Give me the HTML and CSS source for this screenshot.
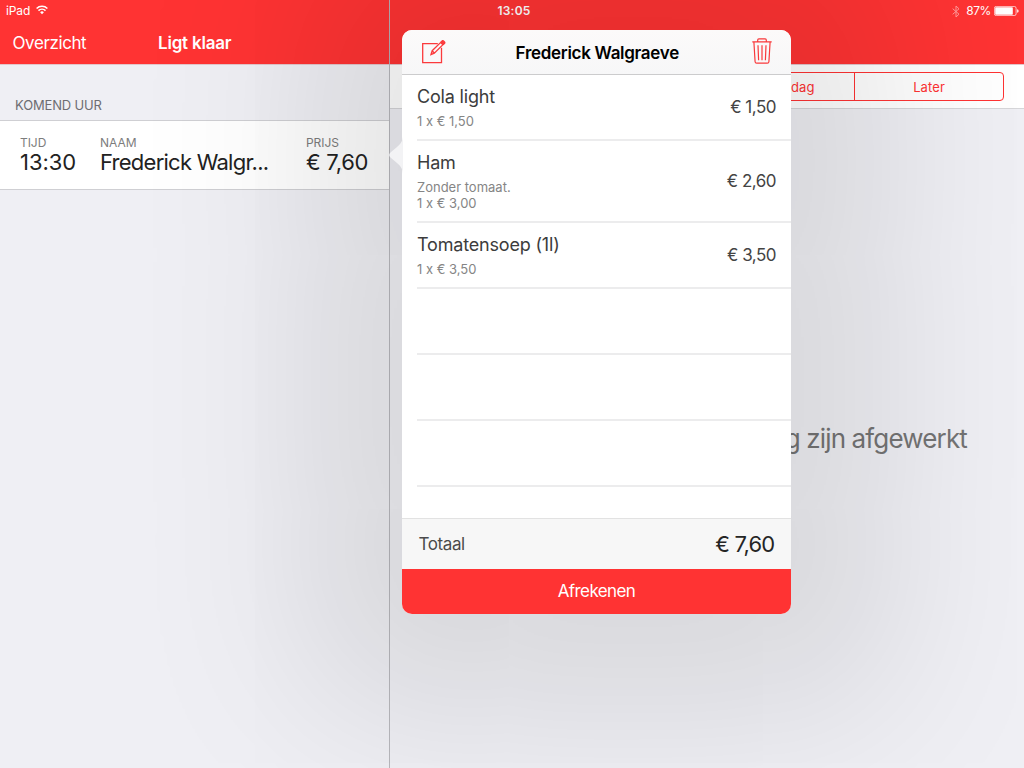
FILE: index.html
```html
<!DOCTYPE html>
<html lang="nl">
<head>
<meta charset="utf-8">
<title>Ligt klaar</title>
<link rel="stylesheet" href="styles.css">
</head>
<body>
<div class="screen">
  <header class="status">
    <div class="status-left"><span class="device">iPad</span>
      <svg class="wifi" width="12" height="10" viewBox="0 0 12 10" fill="none" stroke="#fff" stroke-width="1.5"><path d="M.6 3.500a7.700 7.700 0 0 1 10.800 0M2.500 5.600a5 5 0 0 1 7 0"/><path d="M6 9.300 4.100 7.200a2.800 2.800 0 0 1 3.800 0z" fill="#fff" stroke="none"/></svg>
    </div>
    <span class="clock">13:05</span>
    <div class="status-right">
      <svg class="bt" width="8" height="13" viewBox="0 0 8 13" fill="none" stroke="#fff" stroke-width="1"><path d="M.7 3.700 7 9.200 4 12V1l3 2.800L.7 9.300"/></svg>
      <span class="percent">87%</span>
      <svg width="25" height="10" viewBox="0 0 25 10"><rect x=".4" y=".4" width="21.700" height="9.200" rx="1.800" fill="none" stroke="#fff" stroke-width=".7"/><rect x="1.200" y="1.200" width="17.600" height="7.600" rx=".8" fill="#fff"/><path d="M23.200 3.200q1.400.3 1.400 1.800t-1.400 1.800z" fill="#fff"/></svg>
    </div>
  </header>
  <main class="split">
    <section class="master">
      <nav class="navbar"><a class="back">Overzicht</a><h1 class="nav-title">Ligt klaar</h1></nav>
      <h2 class="section-title">KOMEND UUR</h2>
      <div class="order">
        <div class="field time"><span class="label">TIJD</span><span class="value">13:30</span></div>
        <div class="field name"><span class="label">NAAM</span><span class="value">Frederick Walgr...</span></div>
        <div class="field price"><span class="label">PRIJS</span><span class="value">€ 7,60</span></div>
      </div>
    </section>
    <section class="detail">
      <div class="navbar"></div>
      <div class="toolbar"><div class="segments"><span class="segment day">dag</span><span class="segment later">Later</span></div></div>
      <p class="empty">g zijn afgewerkt</p>
    </section>
  </main>
  <div class="divider"></div>
  <aside class="popover">
    <svg class="arrow" width="14" height="38" viewBox="0 0 14 38"><path d="M14 0C13.500 6 11 8.500 8 11L1.500 16.500Q-1 19 1.500 21.500L8 27C11 29.500 13.500 32 14 38z" fill="#f3f3f5"/></svg>
    <header class="pop-head">
      <svg class="compose" width="24" height="24" viewBox="0 0 24 24" fill="none" stroke="#fb3a3c" stroke-width="1.300"><path d="M15.800 3.600H.7V22.700H19.500V7.800"/><path d="m9 14.500 1.200-3.800L20.300.9q.6-.5 1.200 0l1 1q.5.6 0 1.200L12.300 13.100zM18.700 2.500l2.200 2.200M10.200 10.800l2 2.200"/><path d="m19.300 2 1.100-1 2.200 2-1.100 1.200z" fill="#fb3a3c"/></svg>
      <h2 class="pop-title">Frederick Walgraeve</h2>
      <svg class="trash" width="20" height="26" viewBox="0 0 20 26" fill="none" stroke="#f9393b" stroke-width="1.200"><path d="M.3 3.900H19.700M5.700 3.700V2Q5.700.8 6.900.8h6.200q1.200 0 1.200 1.200v1.700M1.900 4 3.100 23.700Q3.200 25.200 4.700 25.200H15.300Q16.800 25.200 16.900 23.700L18.100 4M6 7.200l.6 15M10 7.200v15M14 7.200l-.6 15"/></svg>
    </header>
    <ul class="lines">
      <li class="line"><div><p class="item">Cola light</p><p class="note">1 x € 1,50</p></div><span class="amount">€ 1,50</span></li>
      <li class="line tall"><div><p class="item">Ham</p><p class="note">Zonder tomaat.<br>1 x € 3,00</p></div><span class="amount">€ 2,60</span></li>
      <li class="line"><div><p class="item">Tomatensoep (1l)</p><p class="note">1 x € 3,50</p></div><span class="amount">€ 3,50</span></li>
      <li class="line"></li><li class="line"></li><li class="line"></li>
    </ul>
    <div class="total"><span class="total-label">Totaal</span><span class="total-value">€ 7,60</span></div>
    <button class="pay">Afrekenen</button>
  </aside>
</div>
</body>
</html>
```

FILE: styles.css
```css
* { box-sizing: border-box; margin: 0; padding: 0; }
body { font-family: Inter, "Liberation Sans", sans-serif; background: #efeff4; }
.screen { position: relative; width: 1024px; height: 768px; overflow: hidden; display: flex; flex-direction: column; }
.status { height: 20px; background: #ff3333; color: #fff; display: grid; grid-template-columns: 1fr auto 1fr; align-items: center; font-size: 12px; line-height: 20px; padding: 1px 6px 0 6px; }
.status-left { display: flex; align-items: center; gap: 6px; }
.device { letter-spacing: -.1px; }
.wifi { margin-top: -2px; }
.clock { font-weight: 600; letter-spacing: .25px; padding-left: 4px; }
.status-right { display: flex; align-items: center; justify-content: flex-end; margin-right: -1px; }
.percent { letter-spacing: -.4px; margin: 0 3px 0 6px; }
.bt { opacity: .5; }
.split { flex: 1; display: flex; }
.master { width: 390px; padding-right: 1px; }
.detail { flex: 1; }
.divider { position: absolute; left: 389px; top: 0; width: 1px; height: 768px; background: rgba(180,180,185,.95); }
.navbar { height: 45px; background: #ff3333; border-bottom: 1px solid #e3c5ca; color: #fff; display: flex; align-items: center; padding: 1px 0 0 12.500px; }
.master .navbar { margin-right: -1px; }
.back { font-size: 17px; width: 145.500px; letter-spacing: -.4px; }
.nav-title { font-size: 17px; font-weight: 600; letter-spacing: -.2px; }
.section-title { height: 56px; padding: 33px 15px 0; font-size: 13px; line-height: 15px; font-weight: 400; color: #6d6d72; letter-spacing: -.15px; border-bottom: 1px solid #cfcfd3; }
.order { height: 69px; background: #fff; border-bottom: 1px solid #cfcfd3; display: flex; padding: 14px 0 0 20px; }
.field { display: flex; flex-direction: column; }
.time { width: 80px; }
.name { width: 206px; }
.label { font-size: 12px; line-height: 15px; color: #7d7d7d; letter-spacing: -.05px; }
.value { font-size: 22px; line-height: 25px; color: #222; letter-spacing: -.3px; }
.time .value { letter-spacing: -.05px; }
.name .value { letter-spacing: -.75px; }
.toolbar { height: 44px; background: #fff; border-bottom: 1px solid #d6d6d9; padding: 7px 20px 0 14px; }
.segments { height: 29px; border: 1px solid #ff3333; border-radius: 4px; display: flex; justify-content: flex-end; color: #ff3333; font-size: 13px; line-height: 28px; }
.day { width: 63px; letter-spacing: .1px; }
.later { width: 149px; border-left: 1px solid #ff3333; text-align: center; letter-spacing: .1px; }
.empty { margin-top: 314px; padding-right: 57px; text-align: right; font-size: 26px; line-height: 32px; color: #747474; letter-spacing: -.85px; }
.popover { position: absolute; left: 402px; top: 30px; width: 389px; height: 584px; border-radius: 10px; background: #fff; display: flex; flex-direction: column; box-shadow: 0 0 180px 95px rgba(0,0,0,.105); }
.arrow { position: absolute; left: -13px; top: 106px; }
.pop-head { height: 45px; background: linear-gradient(#fcfafa, #f7f7f8); border-bottom: 1px solid #cccccd; border-radius: 10px 10px 0 0; display: flex; justify-content: space-between; align-items: center; padding: 0 19px; }
.compose { margin-left: .5px; }
.trash { margin-top: -2px; }
.pop-title { font-size: 17px; font-weight: 600; letter-spacing: -.3px; color: #000; margin-left: -3px; padding-top: 1px; }
.lines { height: 443px; list-style: none; padding-left: 15px; }
.line { height: 66px; border-bottom: 2px solid #ececed; display: flex; justify-content: space-between; align-items: center; padding-right: 15px; }
.tall { height: 82px; }
.item { font-size: 18px; line-height: 22px; color: #3c3c3c; letter-spacing: -.18px; margin-bottom: 5px; }
.note { font-size: 13px; line-height: 16px; color: #858585; letter-spacing: 0; }
.amount { font-size: 17px; color: #444; letter-spacing: -.5px; }
.total { height: 51px; background: #f7f7f7; border-top: 1px solid #e2e2e2; display: flex; align-items: center; justify-content: space-between; padding: 0 16.500px; }
.total-label { font-size: 17px; color: #4b4b4b; letter-spacing: -.4px; }
.total-value { font-size: 22px; color: #252525; letter-spacing: -.75px; }
.pay { height: 45px; border: 0; border-radius: 0 0 10px 10px; background: #ff3333; color: #fff; font: 17px/45px Inter, "Liberation Sans", sans-serif; letter-spacing: -.6px; }
```
